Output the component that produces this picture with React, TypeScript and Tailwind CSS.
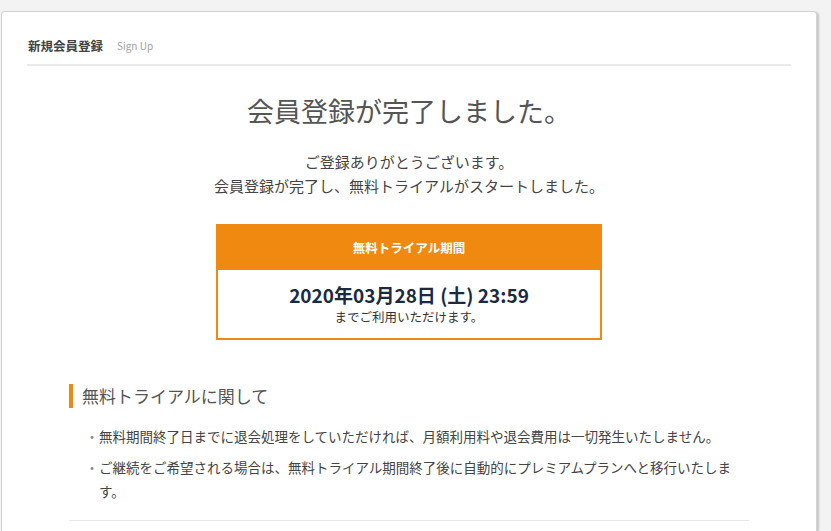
import React from "react";

const font = { fontFamily: '"Noto Sans CJK JP", "Noto Sans", sans-serif' };

export default function App() {
  return (
    <div className="h-[531px] w-[831px] overflow-hidden bg-[#f3f3f3] pt-[11px] pl-[1px]" style={font}>
      <div className="h-[520px] w-[816px] rounded-t-[4px] border border-b-0 border-[#d3d3d3] bg-white shadow-[2px_1px_2px_rgba(0,0,0,0.18)]">
        <div className="mx-[25px] flex items-center border-b-2 border-[#ebebeb] pt-[24px] pb-[8px] leading-[20px]">
          <span className="pl-[1px] text-[12.5px] font-bold text-[#444]">新規会員登録</span>
          <span className="ml-[14px] text-[10px] text-[#a0a0a0]">Sign Up</span>
        </div>

        <h1 className="mt-[27px] text-center text-[27px] leading-[36px] text-[#555]">会員登録が完了しました。</h1>

        <div className="mt-[21px] text-center text-[15px] leading-[24px] text-[#444]">
          <p>ご登録ありがとうございます。</p>
          <p>会員登録が完了し、無料トライアルがスタートしました。</p>
        </div>

        <div className="mx-auto mt-[26px] w-[386px] border-2 border-[#f0890f]">
          <div className="flex h-[44px] items-center justify-center bg-[#f0890f] text-[12.5px] font-bold text-white">
            無料トライアル期間
          </div>
          <div className="pt-[13px] pb-[11px] text-center">
            <div className="text-[19px] font-bold leading-[24px] text-[#1b2a3f]">2020年03月28日 (土) 23:59</div>
            <div className="text-[12.5px] leading-[20px] text-[#333]">までご利用いただけます。</div>
          </div>
        </div>

        <div className="ml-[67px] mt-[44px] w-[680px]">
          <h2 className="border-l-4 border-[#f0890f] pl-[9px] text-[17px] leading-[24px] text-[#555]">無料トライアルに関して</h2>
          <ul className="mt-[16px] flex flex-col gap-[7px] pl-[16px] text-[13.5px] leading-[24px] text-[#444]">
            <li className="flex">
              <span className="w-[14px] shrink-0 text-center text-[#888]">・</span>
              <span>無料期間終了日までに退会処理をしていただければ、月額利用料や退会費用は一切発生いたしません。</span>
            </li>
            <li className="flex">
              <span className="w-[14px] shrink-0 text-center text-[#888]">・</span>
              <span>ご継続をご希望される場合は、無料トライアル期間終了後に自動的にプレミアムプランへと移行いたします。</span>
            </li>
          </ul>
          <div className="mt-[17px] border-t border-[#e8e8e8]" />
        </div>
      </div>
    </div>
  );
}
